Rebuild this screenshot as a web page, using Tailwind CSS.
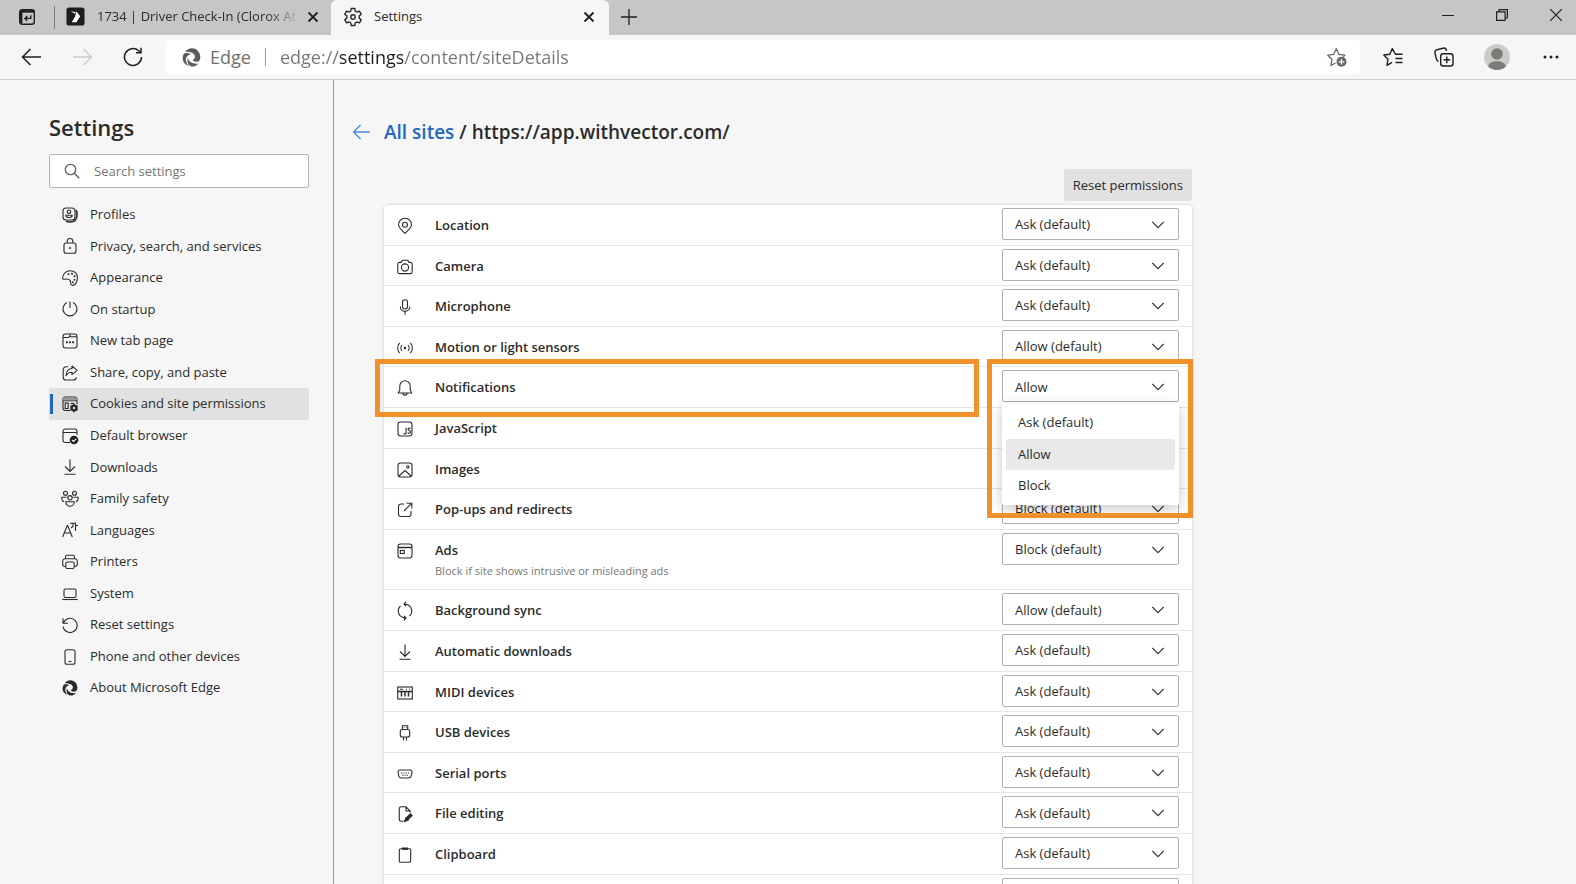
<!DOCTYPE html>
<html lang="en">
<head>
  <meta charset="UTF-8">
  <meta name="viewport" content="width=device-width, initial-scale=1.0">
  <title>Settings</title>
  <script src="https://cdn.jsdelivr.net/npm/@tailwindcss/browser@4"></script>
</head>
<body class="h-screen overflow-hidden flex flex-col bg-[#f6f6f6] text-[#2b2b2b] text-[13px] font-['Open_Sans','Noto_Sans',sans-serif]">

  <!-- Tab strip -->
  <header class="flex h-[35px] shrink-0 bg-[#c6c6c6]">
    <button class="w-[54px] flex items-center justify-center pb-0.5" aria-label="Tab actions">
      <svg class="size-[18px]" viewBox="0 0 18 18" fill="none" stroke="#1f1f1f" stroke-width="1.4"><rect x="1.7" y="1.7" width="14.6" height="14.6" rx="2.5"/><path d="M1.7 3.4h14.6" stroke-width="2.6"/><path d="M3.2 4v11" stroke-width="2.4"/><path d="M12.8 7.2v3.2H7.2M9.3 8l-2.4 2.4 2.4 2.4"/></svg>
    </button>
    <div class="my-1.5 w-px bg-[#7d7d7d]"></div>
    <div class="w-[276px] flex items-center px-[11px] pb-0.5">
      <svg class="size-[19px] shrink-0" viewBox="0 0 20 20"><rect x="0.5" y="0.5" width="19" height="19" rx="3" fill="#1d1d1d"/><path fill="#fff" d="M5 4.2l5.2 1.2L9 7.2zM10.8 4.4l4.2 5.4-4 6.2H6l3.6-6z"/></svg>
      <span class="ml-3 w-[200px] shrink-0 whitespace-nowrap [mask-image:linear-gradient(90deg,#000_170px,transparent_204px)]">1734 | Driver Check-In (Clorox At</span>
      <button class="ml-2.5 size-3 flex" aria-label="Close tab"><svg class="size-3" viewBox="0 0 12 12" stroke="#1f1f1f" stroke-width="1.8"><path d="M1.5 1.5l9 9M10.5 1.5l-9 9"/></svg></button>
    </div>
    <div class="w-[278px] flex items-center rounded-t-md bg-[#f6f6f6] pl-3 pr-3.5 pb-0.5">
      <svg class="size-5" viewBox="0 0 20 20" fill="none" stroke="#2b2b2b" stroke-width="1.4" stroke-linejoin="round"><circle cx="10" cy="10" r="2.2"/><path d="M8.2 1.5h3.6l.5 2.6 1.6.9 2.5-.9 1.8 3.1-2 1.7v2.2l2 1.7-1.8 3.1-2.5-.9-1.6.9-.5 2.6H8.2l-.5-2.6-1.6-.9-2.5.9-1.8-3.1 2-1.7V8.9l-2-1.7 1.8-3.1 2.5.9 1.6-.9z"/></svg>
      <span class="ml-[11px] flex-1">Settings</span>
      <button class="size-3 flex" aria-label="Close tab"><svg class="size-3" viewBox="0 0 12 12" stroke="#1f1f1f" stroke-width="1.8"><path d="M1.5 1.5l9 9M10.5 1.5l-9 9"/></svg></button>
    </div>
    <button class="w-10 flex items-center justify-center pb-0.5" aria-label="New tab"><svg class="size-4" viewBox="0 0 16 16" stroke="#1f1f1f" stroke-width="1.3"><path d="M8 0v16M0 8h16"/></svg></button>
    <div class="ml-auto flex h-[29px] items-center gap-[42px] pr-[14px]">
      <button class="size-3" aria-label="Minimize"><svg class="size-3" viewBox="0 0 12 12" stroke="#1f1f1f"><path d="M0 6.5h12"/></svg></button>
      <button class="size-3" aria-label="Restore"><svg class="size-3" viewBox="0 0 12 12" fill="none" stroke="#1f1f1f" stroke-width="1.2"><path d="M.6 2.9h8.5v8.5H.6zM3 2.9V.6h8.4V9H9.1"/></svg></button>
      <button class="size-3" aria-label="Close"><svg class="size-3" viewBox="0 0 12 12" stroke="#1f1f1f" stroke-width="1.2"><path d="M0 0l12 12M12 0L0 12"/></svg></button>
    </div>
  </header>

  <!-- Toolbar -->
  <div class="flex h-[45px] shrink-0 items-center border-b border-[#cfcfcf]">
    <button class="ml-[21px] size-5" aria-label="Back"><svg class="size-5" viewBox="0 0 20 20" fill="none" stroke="#1f1f1f" stroke-width="1.5"><path d="M20 10H1.5M9.5 2L1.5 10l8 8"/></svg></button>
    <button class="ml-8 size-5" aria-label="Forward" disabled><svg class="size-5" viewBox="0 0 20 20" fill="none" stroke="#cacaca" stroke-width="1.3"><path d="M0 10h18.5M10.5 2l8 8-8 8"/></svg></button>
    <button class="ml-[30px] size-5" aria-label="Refresh"><svg class="size-5" viewBox="0 0 20 20" fill="none" stroke="#1f1f1f" stroke-width="1.5"><path d="M18.5 10A8.5 8.5 0 1 1 15.5 3.5L17.8 5.5M18 .8v5h-5"/></svg></button>
    <form class="ml-[23px] flex h-[34px] flex-1 items-center rounded bg-white text-lg text-[#6f6f6f]">
      <svg class="ml-4 size-[19px] text-[#5c5c5c]" viewBox="0 0 16 16"><use href="#edge"/></svg>
      <label for="address" class="ml-[9px]">Edge</label>
      <div class="mx-3.5 h-[18px] w-px bg-[#9a9a9a]"></div>
      <input id="address" type="text" value="edge://settings/content/siteDetails" class="h-full min-w-0 flex-1 bg-clip-text text-transparent outline-none bg-[linear-gradient(90deg,#767676_60px,#1b1b1b_60px,#1b1b1b_123px,#767676_123px)]">
      <button type="button" class="mr-[13px] size-5" aria-label="Add to favorites"><svg class="size-5" viewBox="0 0 20 20" fill="none" stroke="#666" stroke-width="1.3" stroke-linejoin="round"><path d="M8.5 16L4 18.5l1-6L.8 8.2l5.9-.9L9.3 1.8l2.6 5.5 5.9.9-1.5 1.5"/><circle cx="14.5" cy="14.8" r="5" fill="#666" stroke="none"/><path stroke="#fff" d="M14.5 12v5.6M11.7 14.8h5.6"/></svg></button>
    </form>
    <button class="ml-[23px] size-5" aria-label="Favorites"><svg class="size-5" viewBox="0 0 20 20" fill="none" stroke="#1f1f1f" stroke-width="1.4" stroke-linejoin="round"><path d="M19.5 7.3h-7L9.3 1.5 6.8 7.3l-6 .7L5 12.3l-1 6 5-3M12.5 11.5h7M12.5 15.5h7"/></svg></button>
    <button class="ml-[31px] size-5" aria-label="Collections"><svg class="size-5" viewBox="0 0 20 20" fill="none" stroke="#1f1f1f" stroke-width="1.4"><rect x="6.7" y="6.7" width="12.3" height="12.3" rx="2.5"/><path d="M12.8 9.5v6.7M9.5 12.8h6.7M4.5 14.5C2.5 13.5 2 11.5 1.7 9L1 6C.5 4 1.2 3.2 3 2.7L9 1.2c2-.5 3 .3 3.7 2.5"/></svg></button>
    <button class="ml-[30px] size-[26px]" aria-label="Profile"><svg class="size-[26px]" viewBox="0 0 26 26"><circle cx="13" cy="13" r="13" fill="#cdcbc7"/><circle cx="13" cy="10" r="5.8" fill="#7c7b79"/><path fill="#7c7b79" d="M4 22.2c1.5-4 5-5 9-5s7.5 1 9 5A13 13 0 0 1 13 26a13 13 0 0 1-9-3.8z"/></svg></button>
    <button class="ml-[33px] mr-[17px] size-4" aria-label="More"><svg class="size-4" viewBox="0 0 16 16" fill="#1f1f1f"><circle cx="2" cy="8" r="1.5"/><circle cx="8" cy="8" r="1.5"/><circle cx="14" cy="8" r="1.5"/></svg></button>
  </div>

  <div class="flex min-h-0 flex-1">
    <!-- Sidebar -->
    <aside class="w-[334px] shrink-0 border-r border-[#9c9c9c] pl-[49px] pr-6 pt-[31px]">
      <h1 class="text-[22px] leading-8 font-semibold">Settings</h1>
      <label class="mt-[11px] flex h-[34px] items-center rounded-xs border border-[#b5b5b5] bg-white pl-3.5">
        <svg class="size-4" viewBox="0 0 16 16" fill="none" stroke="#5f5f5f" stroke-width="1.3"><circle cx="6.5" cy="6.5" r="5.2"/><path d="M10.3 10.3l5 5"/></svg>
        <input type="text" aria-label="Search settings" placeholder="Search settings" class="ml-3.5 min-w-0 flex-1 pt-0.5 outline-none placeholder:text-[#757575]">
      </label>
      <nav id="nav" class="mt-[11px] flex h-[505px] flex-col"></nav>
    </aside>

    <!-- Site permissions -->
    <main class="min-w-0 flex-1 pl-[18px] pr-6 pt-9">
      <div class="flex items-center text-[19px] leading-8 font-semibold">
        <button class="mr-[14px] size-[18px]" aria-label="Back to all sites"><svg class="size-[18px]" viewBox="0 0 18 18" fill="none" stroke="#4a8ad4" stroke-width="1.3"><path d="M18 9H1.5M8.5 2l-7 7 7 7"/></svg></button>
        <a href="#" class="text-[#2167c0]">All sites</a>
        <span class="whitespace-pre"> / https://app.withvector.com/</span>
      </div>
      <div class="ml-8 max-w-[808px]">
        <div class="mt-[21px] flex justify-end">
          <button class="h-8 rounded-xs bg-[#e1e1e1] px-[9px] pt-0.5">Reset permissions</button>
        </div>
        <ul id="permissions" class="mt-1 flex h-[710px] flex-col rounded bg-white shadow-[0_0_3px_rgba(0,0,0,0.2)]"></ul>
      </div>
    </main>
  </div>

  <!-- Shared Edge logo -->
  <svg class="hidden">
    <symbol id="edge" viewBox="0 0 16 16">
      <g fill="currentColor">
        <path d="M2.6 3.3C5.5-.8 12-.8 14.5 4c1.6 3.2 1 6.5-.9 7.3-2 .9-4-.2-4.9-1.1 1.9-.7 2.7-2.5 1.9-4.1C9.3 3.6 5.6 3 2.6 3.3z"/>
        <path d="M1.7 4.7c2-.7 4.3-.4 5.6.5-2.8.5-4.6 3-3.9 5.8.4 1.7 1.3 3 2.4 4C1.3 13.9-1 9 1.7 4.7z"/>
        <path d="M5 8.2c.5 3.4 4.3 5.6 8.8 4.800-1.800 2.200-4 2.900-5.900 2.500C5.200 14.700 3.800 11 5 8.200z"/>
      </g>
    </symbol>
  </svg>

  <script>
    // 16x16 line icons
    const icons = {
      profiles: '<rect x="1" y="1" width="12" height="12" rx="3"/><path d="M14 3c1 1 1 2 1 5 0 5-2 7-7 7-2 0-3 0-4-1" stroke-width="1.6"/><circle cx="7" cy="4.7" r="1.7"/><path d="M3.8 8.3h6.4c0 3-6.4 3-6.4 0z"/>',
      lock: '<rect x="2" y="5" width="12" height="10.3" rx="2"/><path d="M5.2 5V3.3a2.8 2.8 0 0 1 5.6 0V5"/><circle cx="8" cy="10" r="1" fill="currentColor" stroke="none"/>',
      palette: '<path d="M.6 7.5C1.5 3.5 4.5.7 8.5.7c4 0 6.9 3 6.9 7 0 4.6-2.6 8-5.3 7.6-2.4-.4-1-3.2-2-4.9C6.9 8.5 4.6 8.9 3 9.2 1.2 9.5.3 9 .6 7.5z"/><g fill="currentColor" stroke="none"><circle cx="6.5" cy="4.2" r="1"/><circle cx="10" cy="3.8" r="1"/><circle cx="12.5" cy="6.3" r="1"/><circle cx="12.5" cy="9.8" r="1"/><circle cx="10.7" cy="12.3" r="1"/></g>',
      power: '<path d="M8 .5v6.5M5 1.6a7 7 0 1 0 6 0"/>',
      newtab: '<rect x="1" y="1" width="14" height="14" rx="2.5"/><path d="M1 4.5h5.5L8 2.8V1M8 3.8h7"/><path d="M4 9.2h1.8M7.1 9.2h1.8M10.2 9.2H12" stroke-width="2"/>',
      share: '<path d="M6 1.8H4A2.8 2.8 0 0 0 1.2 4.6v7.6A2.8 2.8 0 0 0 4 15h7.5a2.8 2.8 0 0 0 2.8-2.6"/><path d="M10 1l5 4.3-5 4.3V7.2c-3 0-4.6 1-6 3.5.3-4 2.3-7 6-7.2z" stroke-linejoin="round"/>',
      cookies: '<path d="M8 14.5H3.5A2.5 2.5 0 0 1 1 12V3.5A2.5 2.5 0 0 1 3.5 1h9A2.5 2.5 0 0 1 15 3.5V8M1 4.7h14"/><path d="M1 3h14" stroke="#999" stroke-width="2.5"/><rect x="3.2" y="7" width="3" height="5.5"/><path d="M8.5 7.5H12"/><circle cx="12" cy="12" r="2.4" stroke-width="2.4"/><path d="M12 7.8v8.4M8.4 9.9l7.2 4.2M15.6 9.9l-7.2 4.2" stroke-width="1.6"/><circle cx="12" cy="12" r="1.2" fill="#e1e1e1" stroke="none"/>',
      browser: '<path d="M8 14.5H3.5A2.5 2.5 0 0 1 1 12V3.5A2.5 2.5 0 0 1 3.5 1h9A2.5 2.5 0 0 1 15 3.5V7M1 4.5h14"/><circle cx="12" cy="12" r="4.3" fill="#1f1f1f" stroke="none"/><path d="M10 12l1.5 1.5 2.7-2.7" stroke="#fff"/>',
      download: '<path d="M8 .5v12M3 7.5l5 5 5-5M2.5 15.2h11"/>',
      family: '<circle cx="3.5" cy="2.3" r="2"/><circle cx="12.5" cy="2.3" r="2"/><circle cx="8" cy="6.8" r="2.2"/><path d="M3.8 10.8h8.4c0 6-8.4 6-8.4 0zM4.5 6.2H-.2c-.2 2 .8 4 2.4 4.5M11.5 6.2h4.7c.2 2-.8 4-2.4 4.5"/>',
      languages: '<path d="M.6 15L5.3 3.5h.4L10.3 15M2.3 11h6.3M8 1.2h5.5M11 1v3.5L9 6M13.5 .5V9M13.5 3.5H16"/>',
      printer: '<path d="M3.5 12.5H2.8A2 2 0 0 1 .7 10.5V7.2A2.5 2.5 0 0 1 3.2 4.7h9.6a2.5 2.5 0 0 1 2.5 2.5v3.3a2 2 0 0 1-2.1 2h-.7M3.5 4.7V3a1.8 1.8 0 0 1 1.8-1.8h5.4A1.8 1.8 0 0 1 12.5 3v1.7"/><rect x="3.8" y="8" width="8.4" height="6.5" rx="1.5"/>',
      laptop: '<rect x="2" y="3" width="12" height="8.5" rx="1.5"/><path d="M.3 13.5h15.4"/>',
      reset: '<path d="M1.2 6.5A7.1 7.1 0 1 1 1 9.5M1 1.3v5h5"/>',
      phone: '<rect x="3" y=".8" width="10" height="14.4" rx="2"/><path d="M6.5 12.5h3"/>',
      edge: '<use href="#edge" stroke="none"/>',
      location: '<path d="M8 15.3C5 12.5 1.5 9.8 1.5 6.8a6.5 6.5 0 0 1 13 0c0 3-3.5 5.7-6.5 8.5z"/><circle cx="8" cy="6.7" r="2.5"/>',
      camera: '<path d="M.8 5.2a1.8 1.8 0 0 1 1.8-1.8H4L5.3 1.2h5.4L12 3.4h1.4a1.8 1.8 0 0 1 1.8 1.8v7.6a1.8 1.8 0 0 1-1.8 1.8H2.6a1.8 1.8 0 0 1-1.8-1.8z"/><circle cx="8" cy="8.5" r="3.6"/>',
      mic: '<rect x="5.5" y=".7" width="5" height="9.3" rx="2.5"/><path d="M3.3 7.5c0 6.5 9.4 6.5 9.4 0M8 12.5v3.2"/>',
      motion: '<circle cx="8" cy="8" r="1.3" fill="currentColor" stroke="none"/><path d="M5 5.2a4 4 0 0 0 0 5.6M11 5.2a4 4 0 0 1 0 5.6M2.6 2.8a8 8 0 0 0 0 10.4M13.4 2.8a8 8 0 0 1 0 10.4"/>',
      bell: '<path d="M1.2 13L2.8 10V6a5.2 5.2 0 0 1 10.4 0v4l1.6 3zM6 13.2c0 2.6 4 2.6 4 0" stroke-linejoin="round"/>',
      js: '<rect x="1" y="1" width="14" height="14" rx="2.5"/><path d="M9 6.8v5.3c0 1.3-2 1.3-2.2 0M13.5 7.6c-.8-1-2.5-.6-2.5.6 0 1.5 2.6 1 2.6 2.7 0 1.5-2 1.8-2.9.7"/>',
      image: '<rect x="1" y="1" width="14" height="14" rx="2.5"/><path d="M2 14l6-5.5L14 14"/><circle cx="10.8" cy="5" r="1.2"/>',
      popup: '<path d="M7 2H4a2.5 2.5 0 0 0-2.5 2.5v7.5A2.5 2.5 0 0 0 4 14.5h7.5A2.5 2.5 0 0 0 14 12V9M9.5 1.2h5.3v5.3M14.8 1.2L7 9"/>',
      ads: '<rect x="1" y="1" width="14" height="14" rx="2.5"/><path d="M1 4.5h14" stroke-width="1.5"/><rect x="3.3" y="7.5" width="4" height="3"/>',
      sync: '<path d="M6 14.5A6.8 6.8 0 0 1 3.5 3M10 1.5A6.8 6.8 0 0 1 12.5 13M9 15a7 7 0 0 1-3-.5M7 1a7 7 0 0 1 3 .5M9 -1L7 1l2 2M7 13l2 2-2 2"/>',
      midi: '<rect x=".7" y="2" width="14.6" height="12"/><path d="M.7 6.5h14.6M4.5 6.5v5M8 6.5v5M11.5 6.5v5" stroke-width="1.5"/><path d="M3 4.3h3M9 4.3h1M12 4.3h1"/>',
      usb: '<path d="M5.3 4.5V.8h5.4v3.7"/><rect x="3.3" y="4.5" width="9.4" height="7.5" rx="2"/><path d="M6.5 12v3.5M9.5 12v3.5M6.8 2.5h.6M8.8 2.5h.6"/>',
      serial: '<path d="M3 4h10a2 2 0 0 1 2 2.5l-.7 3A3 3 0 0 1 11.5 12h-7a3 3 0 0 1-2.8-2.5L1 6.5A2 2 0 0 1 3 4z"/><path d="M4 7h1.2M6.3 7h1.2M8.6 7h1.2M10.9 7h1.2M5.2 9.3h1.2M7.5 9.3h1.2M9.7 9.3h1.2"/>',
      file: '<path d="M6.5 15.2H4A1.7 1.7 0 0 1 2.3 13.5V2.5A1.7 1.7 0 0 1 4 .8h5L13.2 5v1.5M9 .8V5h4.2"/><path d="M14.7 8.3l-5.2 5" stroke-width="3.6"/><path d="M9 12L7.5 15.5 11.3 14z" fill="currentColor"/>',
      clipboard: '<rect x="2.3" y="1.7" width="11.4" height="13.6" rx="1.3"/><path d="M5 1.7h6" stroke-width="2.4"/>'
    };

    const icon = (name, classes) =>
      `<svg class="${classes}" viewBox="0 0 16 16" fill="none" stroke="currentColor" stroke-width="1.1">${icons[name]}</svg>`;

    const navItems = [
      ["profiles", "Profiles"],
      ["lock", "Privacy, search, and services"],
      ["palette", "Appearance"],
      ["power", "On startup"],
      ["newtab", "New tab page"],
      ["share", "Share, copy, and paste"],
      ["cookies", "Cookies and site permissions"],
      ["browser", "Default browser"],
      ["download", "Downloads"],
      ["family", "Family safety"],
      ["languages", "Languages"],
      ["printer", "Printers"],
      ["laptop", "System"],
      ["reset", "Reset settings"],
      ["phone", "Phone and other devices"],
      ["edge", "About Microsoft Edge"]
    ];

    document.getElementById("nav").innerHTML = navItems.map(([name, label]) => {
      const active = label === "Cookies and site permissions";
      return `
        <a href="#" class="flex flex-1 items-center rounded-xs ${active ? "bg-[#e1e1e1]" : ""}">
          <span class="ml-px h-5 w-[3px] ${active ? "bg-[#1f66c1]" : ""}"></span>
          ${icon(name, "ml-[9px] mr-3 size-4 overflow-visible")}
          ${label}
        </a>`;
    }).join("");

    const permissions = [
      ["location", "Location", "Ask (default)"],
      ["camera", "Camera", "Ask (default)"],
      ["mic", "Microphone", "Ask (default)"],
      ["motion", "Motion or light sensors", "Allow (default)"],
      ["bell", "Notifications", "Allow"],
      ["js", "JavaScript", "Allow (default)"],
      ["image", "Images", "Allow (default)"],
      ["popup", "Pop-ups and redirects", "Block (default)"],
      ["ads", "Ads", "Block (default)", "Block if site shows intrusive or misleading ads"],
      ["sync", "Background sync", "Allow (default)"],
      ["download", "Automatic downloads", "Ask (default)"],
      ["midi", "MIDI devices", "Ask (default)"],
      ["usb", "USB devices", "Ask (default)"],
      ["serial", "Serial ports", "Ask (default)"],
      ["file", "File editing", "Ask (default)"],
      ["clipboard", "Clipboard", "Ask (default)"],
      ["", "", ""]
    ];

    // Open drop-down list with the highlight frames around the Notifications row
    const openMenu = `
      <div role="listbox" aria-label="Notifications" class="absolute top-9 right-[13px] z-10 grid h-[102px] w-[177px] auto-rows-fr rounded-xs bg-white p-1 shadow-[0_4px_14px_rgba(0,0,0,0.22)]">
        <div role="option" class="flex items-center rounded-xs pl-3">Ask (default)</div>
        <div role="option" aria-selected="true" class="flex items-center rounded-xs bg-[#e9e9e9] pl-3">Allow</div>
        <div role="option" class="flex items-center rounded-xs pl-3">Block</div>
      </div>
      <div class="pointer-events-none absolute -top-2 right-[213px] -left-[9px] z-20 h-[58px] border-5 border-[#f29129]"></div>
      <div class="pointer-events-none absolute -top-2 -right-px z-20 h-[159px] w-[206px] border-5 border-[#f29129]"></div>`;

    document.getElementById("permissions").innerHTML = permissions.map(([name, label, value, note]) => `
      <li class="relative flex grow items-start border-b border-[#e5e5e5] pt-[3px] pr-[13px] pl-[13px] ${note ? "basis-[60px]" : "basis-[40px]"}">
        ${name ? icon(name, "mt-[10px] mr-[22px] size-4 shrink-0 overflow-visible") : ""}
        <div class="flex-1">
          <label for="perm-${name}" class="block leading-[34px] font-semibold">${label}</label>
          ${note ? `<p class="-mt-1 text-[11px] leading-4 text-[#767676]">${note}</p>` : ""}
        </div>
        <div class="relative">
          <select id="perm-${name}" class="h-8 w-[177px] appearance-none rounded-xs border border-[#b0b0b0] bg-white px-3 pt-0.5 outline-none"><option>${value}</option></select>
          <svg class="pointer-events-none absolute top-[11px] right-[15px] size-3" viewBox="0 0 12 12" fill="none" stroke="#3b3b3b" stroke-width="1.3"><path d="M.3 3L6 8.7 11.7 3"/></svg>
        </div>
        ${label === "Notifications" ? openMenu : ""}
      </li>`).join("");
  </script>
</body>
</html>
